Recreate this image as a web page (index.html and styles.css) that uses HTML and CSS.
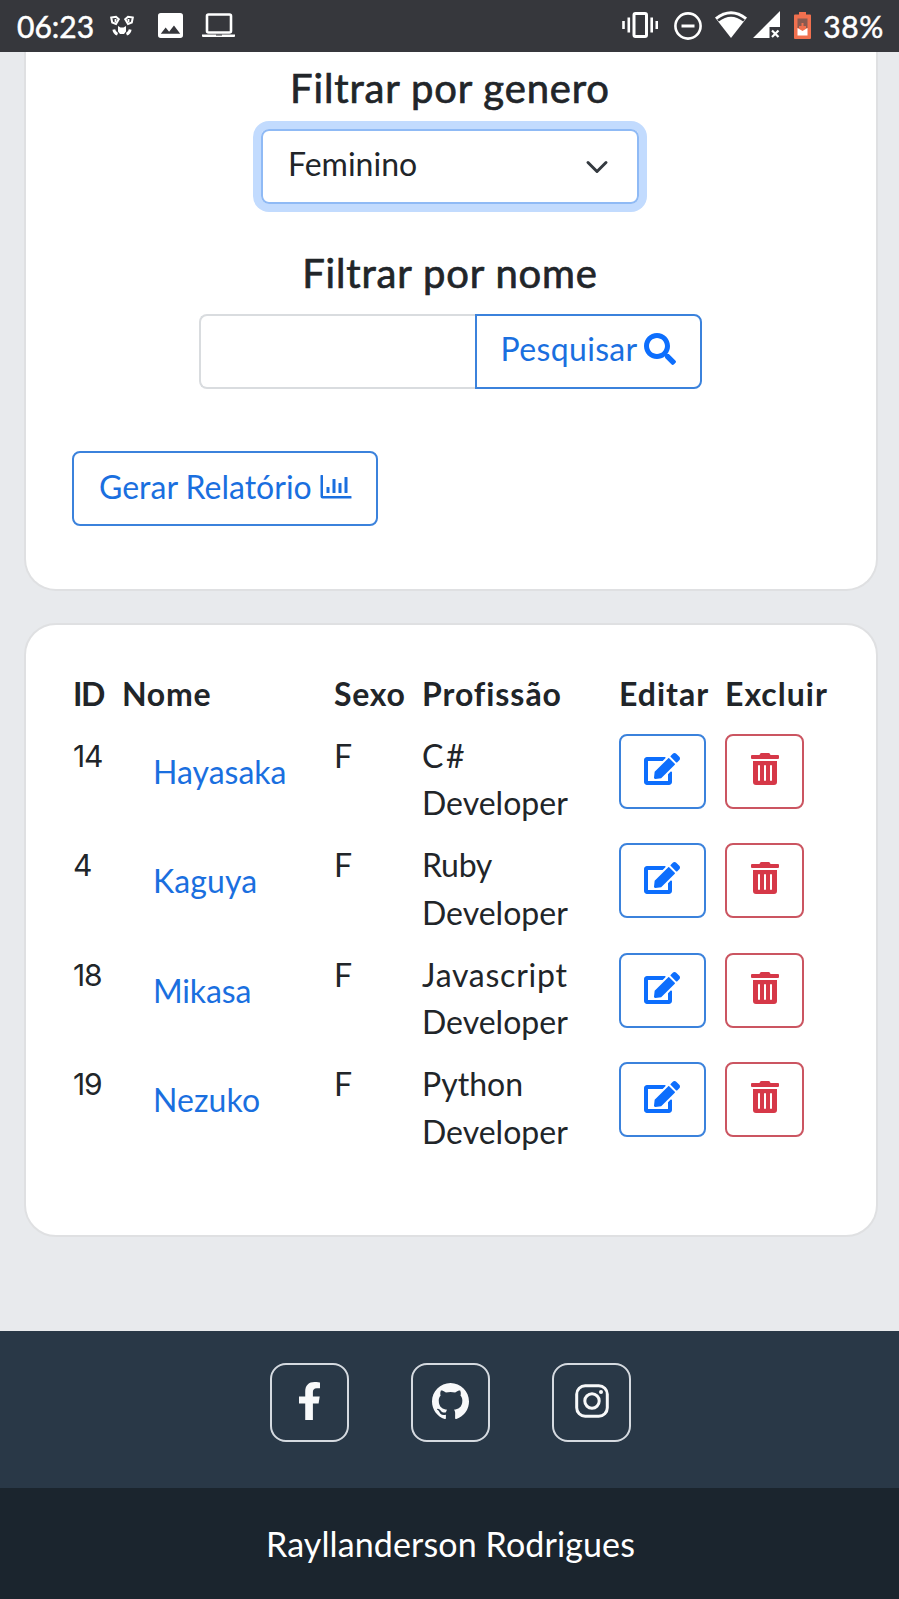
FILE: index.html
```html
<!DOCTYPE html>
<html lang="pt-BR">
<head>
<meta charset="utf-8">
<title>Filtro</title>
<link rel="stylesheet" href="styles.css">
</head>
<body>
<svg class="defs" width="0" height="0">
  <symbol id="edit" viewBox="0 0 576 512"><path d="M402.6 83.2l90.2 90.2c3.8 3.8 3.8 10 0 13.8L274.4 405.6l-92.8 10.3c-12.4 1.4-22.9-9.1-21.5-21.5l10.3-92.8L388.8 83.2c3.8-3.8 10-3.8 13.8 0zm162-22.9l-48.8-48.8c-15.2-15.2-39.9-15.2-55.2 0l-35.4 35.4c-3.8 3.8-3.8 10 0 13.8l90.2 90.2c3.8 3.8 10 3.8 13.8 0l35.4-35.4c15.2-15.3 15.2-40 0-55.2zM384 346.2V448H64V128h229.8c3.2 0 6.2-1.3 8.5-3.5l40-40c7.6-7.6 2.2-20.5-8.5-20.5H48C21.5 64 0 85.5 0 112v352c0 26.5 21.5 48 48 48h352c26.5 0 48-21.5 48-48V306.2c0-10.7-12.9-16-20.5-8.5l-40 40c-2.2 2.3-3.5 5.3-3.5 8.5z"/></symbol>
  <symbol id="trash" viewBox="0 0 448 512"><path d="M32 464a48 48 0 0 0 48 48h288a48 48 0 0 0 48-48V128H32zm272-256a16 16 0 0 1 32 0v224a16 16 0 0 1-32 0zm-96 0a16 16 0 0 1 32 0v224a16 16 0 0 1-32 0zm-96 0a16 16 0 0 1 32 0v224a16 16 0 0 1-32 0zM432 32H312l-9.4-18.7A24 24 0 0 0 281.1 0H166.8a23.72 23.72 0 0 0-21.4 13.3L136 32H16A16 16 0 0 0 0 48v32a16 16 0 0 0 16 16h416a16 16 0 0 0 16-16V48a16 16 0 0 0-16-16z"/></symbol>
</svg>

<header class="status">
  <div class="status-left">
    <span class="clock">06:23</span>
    <svg class="i-panda" viewBox="0 0 24 22" width="24" height="22" fill="none" stroke="#fff" stroke-width="2">
      <path d="M1.2 2.500 6 1.800l2.800 2.400L6 9 2.200 7.500zM22.800 2.500 18 1.800l-2.800 2.400L18 9l3.800-1.500z"/>
      <path d="M5.500 4v3M18.500 4v3" stroke-width="1.800"/>
      <path d="M8 11l2.500 1.500h3L16 11v5.500L14 19h-4l-2-2.500z" fill="#fff" stroke="none"/>
      <path d="M3.800 14.500q.5 3.500 3.700 4.700M20.200 14.500q-.5 3.500-3.700 4.700" stroke-width="2.800"/>
    </svg>
    <svg class="i-image" viewBox="3 3 18 18" width="25" height="25" fill="#fff"><path d="M21 19V5a2 2 0 0 0-2-2H5a2 2 0 0 0-2 2v14a2 2 0 0 0 2 2h14a2 2 0 0 0 2-2zM8.500 13.500l2.500 3 3.500-4.500 4.500 6H5z"/></svg>
    <svg class="i-laptop" viewBox="0 0 33 25" width="33" height="25"><rect x="5" y="1.500" width="24" height="18" rx="1.500" fill="none" stroke="#fff" stroke-width="2.600"/><path d="M0 21.500h33v1.500q0 1-1 1H1q-1 0-1-1z" fill="#fff"/><path d="M14 21.500h6v1h-6z" fill="#36373c"/></svg>
  </div>
  <div class="status-right">
    <svg class="i-vibrate" viewBox="0 0 36 26" width="36" height="26" fill="none" stroke="#fff" stroke-width="2.600"><rect x="12" y="1.500" width="12.500" height="23" rx="1.500" stroke-width="3"/><path d="M1.500 9v8M6.800 5.500v15M29.700 5.500v15M34.800 9v8"/></svg>
    <svg class="i-dnd" viewBox="0 0 28 28" width="28" height="28" fill="none" stroke="#fff" stroke-width="2.600"><circle cx="14" cy="14" r="12.600"/><path d="M7.500 14h13" stroke-width="3"/></svg>
    <svg class="i-wifi" viewBox="0 0 32 27" width="32" height="27"><path d="M16 27 0 6.500Q16-6 32 6.500z" fill="#fff"/><path d="M3 9.500Q16-.5 29 9.500" fill="none" stroke="#36373c" stroke-width="2.600"/></svg>
    <svg class="i-signal" viewBox="0 0 27 27" width="27" height="27"><path d="M0 27 27 0v16H16.500v11z" fill="#fff"/><path d="M19 19.500l6.500 6.500M25.500 19.500 19 26" stroke="#fff" stroke-width="2.200"/></svg>
    <svg class="i-battery" viewBox="0 0 17 27" width="17" height="27"><path d="M5 0h7v2.500h4q1 0 1 1V26q0 1-1 1H1q-1 0-1-1V3.500q0-1 1-1h4z" fill="#f0704f"/><path d="M3.500 6.500h10V16h-10z" fill="#8a5a50"/><path d="M3.500 16 8.500 19l5-3v7.500h-10z" fill="#fff"/><path d="M7.500 11h2v3h2.500v2.500h-7V14h2.500z" fill="#f0704f"/></svg>
    <span class="percent">38%</span>
  </div>
</header>

<main class="main">
  <section class="card filters">
    <h2 class="title genero">Filtrar por genero</h2>
    <div class="select"><span>Feminino</span>
      <svg viewBox="0 0 16 16" width="24" height="24"><path d="M2 5l6 6 6-6" fill="none" stroke="#343a40" stroke-width="2" stroke-linecap="round" stroke-linejoin="round"/></svg>
    </div>
    <h2 class="title nome">Filtrar por nome</h2>
    <div class="search">
      <div class="input"></div>
      <div class="btn search-btn"><span class="t-pesquisar">Pesquisar</span>
        <svg viewBox="0 0 512 512" width="32" height="32" fill="currentColor"><path d="M505 442.700L405.300 343c-4.500-4.500-10.600-7-17-7H372c27.600-35.300 44-79.700 44-128C416 93.100 322.900 0 208 0S0 93.100 0 208s93.100 208 208 208c48.300 0 92.700-16.400 128-44v16.300c0 6.400 2.500 12.500 7 17l99.700 99.700c9.400 9.400 24.600 9.400 33.900 0l28.300-28.300c9.400-9.400 9.400-24.600.1-34zM208 336c-70.700 0-128-57.200-128-128 0-70.700 57.200-128 128-128 70.700 0 128 57.200 128 128 0 70.700-57.200 128-128 128z"/></svg>
      </div>
    </div>
    <div class="btn report"><span class="t-gerar">Gerar Relatório</span>
      <svg viewBox="0 0 32 24" width="32" height="24" fill="currentColor"><path d="M.5.500Q.5 0 1 0h1.500q.5 0 .5.500V21h28q.5 0 .5.500V23q0 .5-.5.500H2.500q-2 0-2-2z"/><rect x="6.500" y="12" width="3" height="6" rx=".6"/><rect x="12.500" y="4" width="3" height="14" rx=".6"/><rect x="18.500" y="8" width="3" height="10" rx=".6"/><rect x="24.500" y="2" width="3" height="16" rx=".6"/></svg>
    </div>
  </section>

  <section class="card table">
    <div class="row head"><span class="h-id">ID</span><span class="h-nome">Nome</span><span class="h-sexo">Sexo</span><span class="h-prof">Profissão</span><span class="h-edit">Editar</span><span class="h-excl">Excluir</span></div>
    <div class="row"><span class="num">14</span><a class="name">Hayasaka</a><span class="sex">F</span><span class="job"><span class="j-c">C#</span><br>Developer</span><span class="act edit"><svg width="36" height="32"><use href="#edit"/></svg></span><span class="act del"><svg width="28" height="32"><use href="#trash"/></svg></span></div>
    <div class="row"><span class="num">4</span><a class="name n-wide">Kaguya</a><span class="sex">F</span><span class="job"><span class="j-ruby">Ruby</span><br>Developer</span><span class="act edit"><svg width="36" height="32"><use href="#edit"/></svg></span><span class="act del"><svg width="28" height="32"><use href="#trash"/></svg></span></div>
    <div class="row"><span class="num">18</span><a class="name n-mikasa">Mikasa</a><span class="sex">F</span><span class="job"><span class="j-js">Javascript</span><br>Developer</span><span class="act edit"><svg width="36" height="32"><use href="#edit"/></svg></span><span class="act del"><svg width="28" height="32"><use href="#trash"/></svg></span></div>
    <div class="row"><span class="num">19</span><a class="name n-wide">Nezuko</a><span class="sex">F</span><span class="job">Python<br>Developer</span><span class="act edit"><svg width="36" height="32"><use href="#edit"/></svg></span><span class="act del"><svg width="28" height="32"><use href="#trash"/></svg></span></div>
  </section>
</main>

<footer class="footer">
  <div class="social">
    <a class="soc"><svg viewBox="22.890 0 256.250 512" preserveAspectRatio="none" width="21" height="38" fill="#f8f9fa"><path d="M279.140 288l14.220-92.660h-88.910v-60.130c0-25.350 12.420-50.060 52.240-50.060h40.420V6.260S260.430 0 225.360 0c-73.220 0-121.080 44.380-121.080 124.720v70.620H22.890V288h81.390v224h100.170V288z" transform="matrix(.934 0 0 1 1.500 0)"/></svg></a>
    <a class="soc"><svg viewBox="0 0 16 16" width="37" height="37" fill="#f8f9fa"><path d="M8 0C3.580 0 0 3.580 0 8c0 3.540 2.290 6.530 5.470 7.590.4.070.55-.17.55-.38 0-.19-.01-.82-.01-1.490-2.010.37-2.530-.49-2.690-.94-.09-.23-.48-.94-.82-1.130-.28-.15-.68-.52-.01-.53.63-.01 1.080.58 1.230.82.720 1.210 1.870.87 2.330.66.070-.52.280-.87.510-1.070-1.780-.2-3.640-.89-3.640-3.950 0-.87.310-1.590.82-2.150-.08-.2-.36-1.020.08-2.120 0 0 .67-.21 2.200.82.640-.18 1.320-.27 2-.27s1.360.09 2 .27c1.530-1.040 2.200-.82 2.200-.82.440 1.100.16 1.920.08 2.120.51.560.82 1.270.82 2.150 0 3.070-1.870 3.750-3.650 3.950.29.250.54.730.54 1.480 0 1.070-.01 1.930-.01 2.200 0 .21.150.46.550.38A8.010 8.010 0 0 0 16 8c0-4.420-3.580-8-8-8z"/></svg></a>
    <a class="soc"><svg viewBox="0 0 34 34" width="34" height="34" fill="none" stroke="#f8f9fa" stroke-width="3"><rect x="1.700" y="1.700" width="30.600" height="30.600" rx="8.500"/><circle cx="17" cy="17" r="7.200"/><circle cx="26" cy="8" r="2" fill="#f8f9fa" stroke="none"/></svg></a>
  </div>
  <div class="credit"><span>Rayllanderson Rodrigues</span></div>
</footer>
</body>
</html>
```

FILE: styles.css
```css
* { box-sizing: border-box; }
body {
  margin: 0;
  width: 899px;
  height: 1599px;
  display: flex;
  flex-direction: column;
  overflow: hidden;
  background: #e8eaed;
  color: #212529;
  font: 400 32px/47.4px Lato, "Open Sans", sans-serif;
}
svg { display: block; flex: none; }
.defs { position: absolute; }

/* Status bar */
.status {
  height: 52px;
  flex: none;
  display: flex;
  justify-content: space-between;
  padding: 0 17px;
  background: #36373c;
  color: #fff;
  font-size: 30px;
  line-height: 52px;
  -webkit-text-stroke: .5px #fff;
}
.status-left, .status-right { display: flex; align-items: flex-start; }
.status svg { -webkit-text-stroke: 0; }
.clock { width: 93px; }
.i-panda { margin-top: 15px; }
.i-image { margin: 13px 0 0 24px; }
.i-laptop { margin: 13px 0 0 19px; }
.i-vibrate { margin-top: 12px; }
.i-dnd { margin: 12px 0 0 16px; }
.i-wifi { margin: 11px 0 0 13px; }
.i-signal { margin: 11px 0 0 6px; }
.i-battery { margin: 12px 0 0 14px; }
.percent { margin: 0 -2px 0 12px; letter-spacing: .6px; }

/* Cards */
.main { width: 854px; height: 1279px; margin-left: 24px; flex: none; }
.card { background: #fff; border: 2px solid #dfe0e2; border-radius: 32px; }
.filters {
  height: 539px;
  padding: 12px 48px 0 46px;
  border-top: 0;
  border-radius: 0 0 32px 32px;
  display: flex;
  flex-direction: column;
  align-items: center;
}
.title {
  margin: 0;
  font-size: 40px;
  font-weight: 400;
  line-height: 48px;
  letter-spacing: .85px;
  -webkit-text-stroke: .7px #212529;
}
.genero { margin-bottom: 17px; }
.nome { margin: 45px 0 17px; }
.select {
  width: 378px;
  height: 75px;
  padding: 0 28px 6px 25px;
  display: flex;
  align-items: center;
  justify-content: space-between;
  border: 2px solid #8fbaf5;
  border-radius: 8px;
  box-shadow: 0 0 0 8px #c2dbfe;
}
.select svg { margin-top: 6px; }
.search { display: flex; width: 503px; height: 75px; }
.input { width: 276px; border: 2px solid #d9dcdf; border-right: 0; border-radius: 8px 0 0 8px; }
.btn {
  display: flex;
  align-items: center;
  justify-content: space-between;
  color: #0d6efd;
  border: 2px solid #3b82dc;
  border-radius: 8px;
}
.t-pesquisar, .t-gerar { color: #1a6fdf; }
.search-btn { flex: 1; padding: 0 24px 5px 24px; border-radius: 0 8px 8px 0; }
.t-pesquisar { letter-spacing: .35px; }
.report { width: 306px; height: 75px; margin-top: 62px; padding: 0 24px 4px 25px; align-self: flex-start; color: #1a6fdf; }

/* Table */
.table { height: 614px; margin-top: 32px; padding: 45px 0 0 47px; }
.row { display: grid; grid-template-columns: 49px 212px 88px 197px 106px 1fr; height: 109.400px; }
.head { height: 62px; font-weight: 700; }
.h-id { letter-spacing: -1.500px; }
.h-nome, .h-sexo { letter-spacing: .7px; }
.h-prof { letter-spacing: .95px; }
.h-edit { letter-spacing: 1px; }
.h-excl { letter-spacing: 1px; }
.num { font-family: Inter, sans-serif; font-size: 30px; letter-spacing: -1.200px; margin-top: 1px; }
.name { padding: 16px 0 0 31px; color: #1a6fdf; }
.n-wide { letter-spacing: .1px; }
.n-mikasa { letter-spacing: -.15px; }
.j-c { letter-spacing: 2.500px; }
.j-ruby { letter-spacing: -.3px; }
.j-js { letter-spacing: .75px; }
.act {
  height: 75px;
  margin-top: 2px;
  padding-bottom: 5px;
  display: flex;
  align-items: center;
  justify-content: center;
  border: 2px solid;
  border-radius: 8px;
}
.act svg { fill: currentColor; }
.edit { width: 87px; color: #0d6efd; border-color: #3b82dc; }
.edit svg { margin-right: 1px; }
.del { width: 79px; color: #d63848; border-color: #cb5561; }

/* Footer */
.footer { flex: 1; display: flex; flex-direction: column; color: #fff; }
.social { height: 157px; padding: 32px 0 0 2px; display: flex; justify-content: center; gap: 62px; background: #293847; }
.soc {
  width: 79px;
  height: 79px;
  padding-bottom: 3px;
  display: flex;
  align-items: center;
  justify-content: center;
  border: 2px solid #d5dae0;
  border-radius: 16px;
}
.credit { flex: 1; padding-left: 2px; background: #1b252e; text-align: center; font-size: 34px; line-height: 112px; letter-spacing: .12px; }
```
